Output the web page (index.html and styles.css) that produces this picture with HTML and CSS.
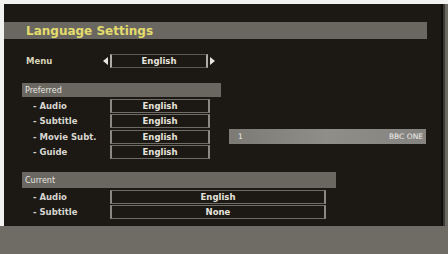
FILE: index.html
```html
<!DOCTYPE html>
<html>
<head>
<meta charset="utf-8">
<link rel="stylesheet" href="styles.css">
</head>
<body>
<div class="screen">
  <div class="tv">
    <div class="main">
      <div class="title-bar"><span class="title">Language Settings</span></div>
      <div class="menu-row">
        <span class="menu-label">Menu</span>
        <span class="arrow left"></span>
        <span class="menu-box">English</span>
        <span class="arrow right"></span>
      </div>
      <div class="pref-wrap">
        <div class="pref">
          <div class="header">Preferred</div>
          <div class="rows">
            <div class="row"><span class="label">- Audio</span><span class="val">English</span></div>
            <div class="row"><span class="label">- Subtitle</span><span class="val">English</span></div>
            <div class="row"><span class="label">- Movie Subt.</span><span class="val">English</span></div>
            <div class="row"><span class="label">- Guide</span><span class="val">English</span></div>
          </div>
        </div>
        <div class="channel"><span>1</span><span>BBC ONE</span></div>
      </div>
      <div class="current">
        <div class="header wide">Current</div>
        <div class="rows">
          <div class="row"><span class="label">- Audio</span><span class="val wideval">English</span></div>
          <div class="row"><span class="label">- Subtitle</span><span class="val wideval">None</span></div>
        </div>
      </div>
    </div>
    <div class="edge"></div>
  </div>
  <div class="footer"></div>
</div>
</body>
</html>
```
FILE: styles.css
```css
html, body {
  margin: 0;
  padding: 0;
  background: #f2f2f0;
}
.screen {
  width: 448px;
  height: 254px;
  display: flex;
  flex-direction: column;
  padding-top: 4px;
  box-sizing: border-box;
  font-family: "DejaVu Sans", sans-serif;
  font-weight: bold;
  color: #e6e4dc;
}
.tv {
  display: flex;
  height: 222px;
  padding-left: 4px;
}
.main {
  width: 437px;
  background: #1c1915;
  display: flex;
  flex-direction: column;
  padding-top: 18px;
  box-sizing: border-box;
}
.edge {
  width: 7px;
  background: linear-gradient(90deg, #0f0d0b 0 2px, #3a3834 2px 4px, #6a6862 4px 7px);
}
.footer {
  height: 28px;
  background: #6e6c64;
}
.title-bar {
  width: 423px;
  height: 17px;
  background: #6a6761;
  display: flex;
  align-items: center;
  padding-left: 22px;
  box-sizing: border-box;
}
.title {
  color: #e4dc6c;
  font-size: 12px;
}
.menu-row {
  display: flex;
  align-items: center;
  margin-top: 15px;
  height: 14px;
  font-size: 8.5px;
}
.menu-label {
  width: 77px;
  padding-left: 22px;
  color: #d8d4b8;
}
.arrow {
  width: 0;
  height: 0;
  border-top: 4px solid transparent;
  border-bottom: 4px solid transparent;
}
.arrow.left {
  border-right: 5px solid #e8e6e0;
  margin-right: 2px;
}
.arrow.right {
  border-left: 5px solid #e8e6e0;
  margin-left: 2px;
}
.menu-box {
  width: 98px;
  height: 14px;
  box-sizing: border-box;
  border: 1px solid #5c5952;
  border-left: 2px solid #b0ada6;
  border-right: 2px solid #b0ada6;
  display: flex;
  align-items: center;
  justify-content: center;
}
.pref-wrap {
  display: flex;
  margin-top: 15px;
}
.pref {
  display: flex;
  flex-direction: column;
}
.header {
  margin-left: 18px;
  width: 199px;
  height: 14px;
  background: #6a6761;
  font-size: 8px;
  font-weight: normal;
  color: #e8e6e0;
  display: flex;
  align-items: center;
  padding-left: 3px;
  box-sizing: border-box;
}
.header.wide {
  width: 314px;
  height: 16px;
}
.rows {
  display: flex;
  flex-direction: column;
  margin-top: 1px;
}
.row {
  display: flex;
  align-items: center;
  height: 15.5px;
  font-size: 8.5px;
}
.label {
  width: 106px;
  padding-left: 29px;
  box-sizing: border-box;
  color: #d8d6d0;
}
.val {
  width: 100px;
  height: 14px;
  box-sizing: border-box;
  border: 1px solid #6f6c66;
  border-left: 2px solid #8c8982;
  border-right: 2px solid #8c8982;
  display: flex;
  align-items: center;
  justify-content: center;
}
.val.wideval {
  width: 216px;
}
.channel {
  margin-left: 8px;
  margin-top: 46px;
  width: 197px;
  height: 15px;
  background: linear-gradient(90deg, #7c7a74, #908e88 50%, #858380);
  display: flex;
  align-items: center;
  justify-content: space-between;
  padding: 0 3px 0 9px;
  box-sizing: border-box;
  font-size: 7.5px;
  font-weight: normal;
  color: #eeeeea;
}
.current {
  display: flex;
  flex-direction: column;
  margin-top: 12px;
}
```
